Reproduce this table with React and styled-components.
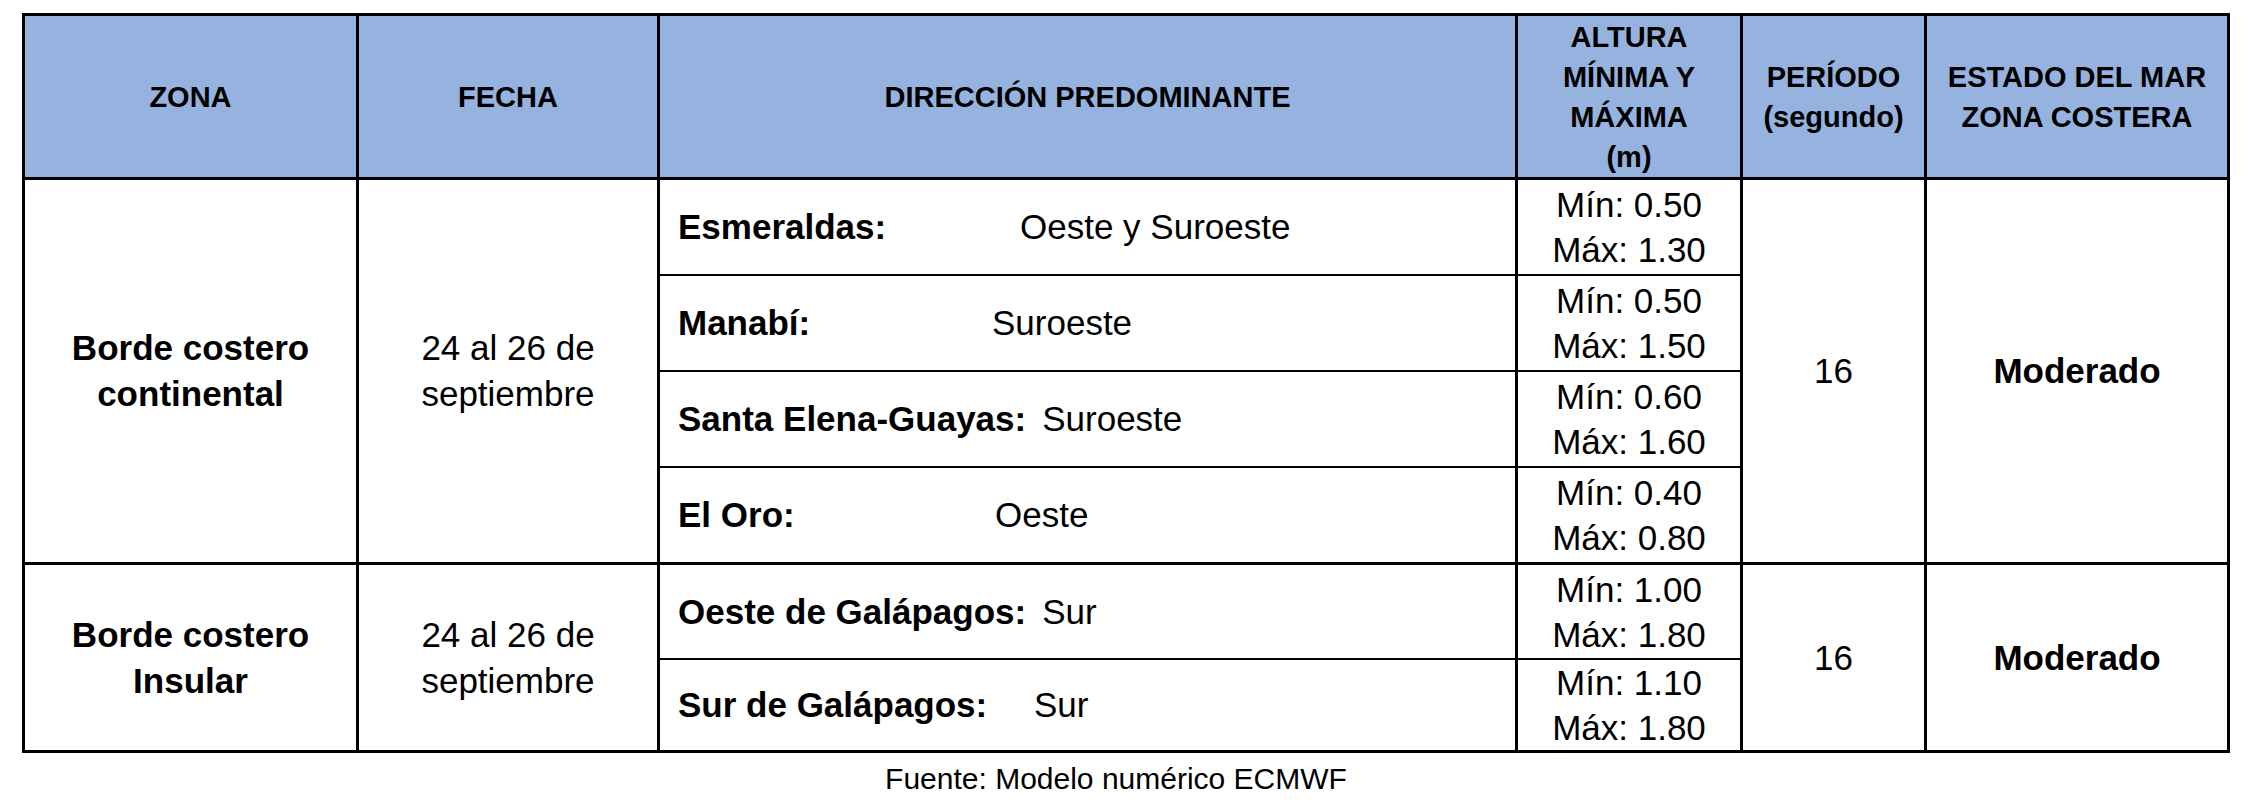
import React from "react";
import styled, { createGlobalStyle } from "styled-components";

const GlobalStyle = createGlobalStyle`
  html, body { margin: 0; padding: 0; background: #ffffff; }
  body {
    font-family: "Liberation Sans", Arial, sans-serif;
    color: #000000;
  }
`;

const Page = styled.main`
  width: 2252px;
  box-sizing: border-box;
  padding: 13px 0 0 22px;
`;

const Figure = styled.figure`
  margin: 0;
  width: 2208px;
`;

const Table = styled.table`
  border-collapse: separate;
  border-spacing: 0;
  table-layout: fixed;
  width: 2208px;
  border-top: 3px solid #000;
  border-left: 3px solid #000;
`;

const HeadRow = styled.tr`
  height: 164px;
`;

const HeadCell = styled.th`
  box-sizing: border-box;
  width: ${(p) => p.$w}px;
  height: 164px;
  padding: 0 4px;
  background: #95b3de;
  border-right: 3px solid #000;
  border-bottom: 3px solid #000;
  font-size: 29px;
  line-height: 40px;
  font-weight: 700;
  text-align: center;
  vertical-align: middle;
`;

const BodyRow = styled.tr`
  height: ${(p) => p.$h}px;
`;

const Cell = styled.td`
  box-sizing: border-box;
  padding: 0 6px;
  border-right: 3px solid #000;
  border-bottom: ${(p) => (p.$last ? 3 : 2)}px solid #000;
  font-size: 35px;
  line-height: 46px;
  font-weight: ${(p) => (p.$bold ? 700 : 400)};
  text-align: center;
  vertical-align: middle;
`;

const DirCell = styled(Cell)`
  padding: 0 0 0 18px;
  text-align: left;
`;

const DirLine = styled.div`
  display: flex;
  align-items: baseline;
  white-space: nowrap;
`;

const Place = styled.span`
  font-weight: 700;
  min-width: ${(p) => p.$min}px;
  margin-right: 16px;
`;

const Heading = styled.span`
  font-weight: 400;
`;

const Range = styled(Cell)`
  line-height: 45px;
`;

const Footer = styled.figcaption`
  margin: 8px 0 0;
  padding-right: 20px;
  text-align: center;
  font-size: 30px;
  line-height: 36px;
`;

const headers = [
  { w: 334, label: ["ZONA"] },
  { w: 301, label: ["FECHA"] },
  { w: 858, label: ["DIRECCIÓN PREDOMINANTE"] },
  { w: 225, label: ["ALTURA", "MÍNIMA Y", "MÁXIMA", "(m)"] },
  { w: 184, label: ["PERÍODO", "(segundo)"] },
  { w: 303, label: ["ESTADO DEL MAR", "ZONA COSTERA"] },
];

const groups = [
  {
    zone: ["Borde costero", "continental"],
    period: "16",
    state: "Moderado",
    rows: [
      { h: 96, place: "Esmeraldas:", dir: "Oeste y Suroeste", min: "0.50", max: "1.30", pw: 326 },
      { h: 96, place: "Manabí:", dir: "Suroeste", min: "0.50", max: "1.50", pw: 298 },
      { h: 96, place: "Santa Elena-Guayas:", dir: "Suroeste", min: "0.60", max: "1.60", pw: 0 },
      { h: 97, place: "El Oro:", dir: "Oeste", min: "0.40", max: "0.80", pw: 301 },
    ],
  },
  {
    zone: ["Borde costero", "Insular"],
    period: "16",
    state: "Moderado",
    rows: [
      { h: 95, place: "Oeste de Galápagos:", dir: "Sur", min: "1.00", max: "1.80", pw: 0 },
      { h: 93, place: "Sur de Galápagos:", dir: "Sur", min: "1.10", max: "1.80", pw: 340 },
    ],
  },
];

const Lines = ({ items }) =>
  items.map((t, i) => (
    <React.Fragment key={i}>
      {i > 0 && <br />}
      {t}
    </React.Fragment>
  ));

export default function App() {
  return (
    <>
      <GlobalStyle />
      <Page>
        <Figure>
          <Table>
            <thead>
              <HeadRow>
                {headers.map((h, i) => (
                  <HeadCell key={i} $w={h.w}>
                    <Lines items={h.label} />
                  </HeadCell>
                ))}
              </HeadRow>
            </thead>
            <tbody>
              {groups.map((g, gi) =>
                g.rows.map((r, ri) => {
                  const last = ri === g.rows.length - 1;
                  return (
                    <BodyRow key={`${gi}-${ri}`} $h={r.h}>
                      {ri === 0 && (
                        <>
                          <Cell rowSpan={g.rows.length} $last $bold>
                            <Lines items={g.zone} />
                          </Cell>
                          <Cell rowSpan={g.rows.length} $last>
                            <Lines items={["24 al 26 de", "septiembre"]} />
                          </Cell>
                        </>
                      )}
                      <DirCell $last={last}>
                        <DirLine>
                          <Place $min={r.pw}>{r.place}</Place>
                          <Heading>{r.dir}</Heading>
                        </DirLine>
                      </DirCell>
                      <Range $last={last}>
                        Mín: {r.min}
                        <br />
                        Máx: {r.max}
                      </Range>
                      {ri === 0 && (
                        <>
                          <Cell rowSpan={g.rows.length} $last>
                            {g.period}
                          </Cell>
                          <Cell rowSpan={g.rows.length} $last $bold>
                            {g.state}
                          </Cell>
                        </>
                      )}
                    </BodyRow>
                  );
                })
              )}
            </tbody>
          </Table>
          <Footer>Fuente: Modelo numérico ECMWF</Footer>
        </Figure>
      </Page>
    </>
  );
}
